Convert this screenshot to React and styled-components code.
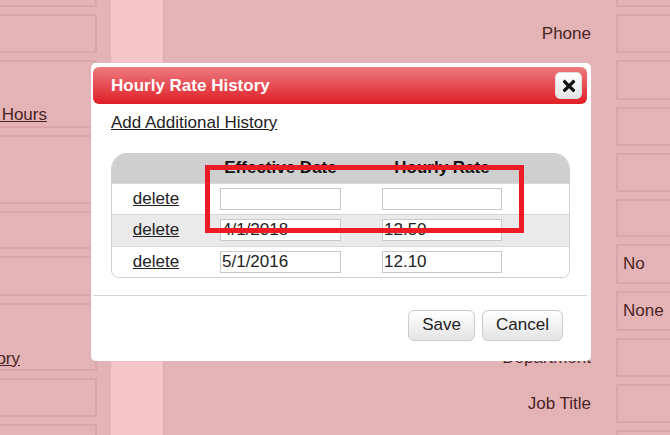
import React from "react";
import styled, { createGlobalStyle } from "styled-components";
import { FaTimes } from "react-icons/fa";

const GlobalStyle = createGlobalStyle`
    html, body {
        margin:0;
        padding:0;
        overflow:hidden;
    }
    body {
        font-family:"Liberation Sans", Arial, sans-serif;
        font-size:17px;
    }
`

const Page = styled.div`
    position:relative;
    display:flex;
    width:670px;
    height:435px;
    overflow:hidden;
    background:#e4b3b5;
    color:#4a2526;
`

const LeftColumn = styled.div`
    flex:none;
    display:flex;
    flex-direction:column;
    gap:7px;
    width:107px;
    margin-left:-10px;
`

const Band = styled.div`
    flex:none;
    width:52px;
    margin-left:14px;
    background:#f7c5c8;
    border-right:1px solid #dba9ac;
`

const RightColumn = styled.div`
    flex:1;
    display:flex;
    flex-direction:column;
    gap:7px;
    margin-right:-10px;
`

const Row = styled.div`
    display:grid;
    grid-template-columns:1fr 64px;
    column-gap:25px;
    align-items:center;
`

const Label = styled.span`
    text-align:right;
`

const Field = styled.div`
    box-sizing:border-box;
    flex:none;
    display:flex;
    align-items:${props => props.$tall ? 'flex-end' : 'center'};
    justify-content:${props => props.$tall ? 'flex-end' : 'flex-start'};
    height:${props => props.$height}px;
    padding:${props => props.$tall ? `0 ${props.$inset}px ${props.$lift}px 0` : '0 0 0 5px'};
    border:2px solid #d9a6a9;
    border-top-width:${props => props.$clipped ? 0 : 2}px;
    white-space:nowrap;
`

const PageLink = styled.a`
    color:#4a2526;
    text-decoration:underline;
`

const Modal = styled.div`
    box-sizing:border-box;
    position:absolute;
    left:91px;
    top:63px;
    display:flex;
    flex-direction:column;
    width:500px;
    height:298px;
    padding:4px 4px 0 2px;
    background:#fff;
    border-radius:5px;
    box-shadow:0 0 1px #d8d0d0;
    color:#222;
`

const TitleBar = styled.div`
    flex:none;
    display:flex;
    align-items:center;
    justify-content:space-between;
    height:37px;
    padding:0 5px 0 18px;
    background:linear-gradient(#ed7b81, #e01e26);
    border-radius:6px;
`

const Title = styled.h2`
    margin:0;
    font-size:17px;
    font-weight:bold;
    color:#fff;
`

const CloseBtn = styled.button`
    display:flex;
    align-items:center;
    justify-content:center;
    width:27px;
    height:27px;
    padding:0;
    background:linear-gradient(#fff, #e4e4e4);
    border:1px solid #ddd;
    border-radius:5px;
    color:#111;
`

const Body = styled.div`
    flex:1;
    padding:10px 17px 0 18px;
`

const AddLink = styled.a`
    display:block;
    line-height:18px;
    color:#222;
    text-decoration:underline;
`

const Table = styled.div`
    box-sizing:border-box;
    height:125px;
    margin-top:21px;
    border:1px solid #d2d2d2;
    border-top:0;
    border-radius:16px 16px 8px 8px;
    overflow:hidden;
`

const HeadRow = styled.div`
    display:grid;
    grid-template-columns:108px 121px 41px 120px;
    align-items:center;
    height:30px;
    background:#cfcfcf;
    font-weight:bold;
    color:#111;
    text-align:center;
`

const HeadCell = styled.span`
    white-space:nowrap;
    grid-column:${props => props.$col};
`

const DataRow = styled.div`
    box-sizing:border-box;
    display:grid;
    grid-template-columns:108px 121px 41px 120px;
    align-items:center;
    height:${props => props.$shaded ? 32 : 31}px;
    padding-bottom:${props => props.$shaded ? 1 : 0}px;
    background:${props => props.$shaded ? '#eaeaea' : '#fff'};
    border-top:1px solid ${props => props.$shaded ? '#d4d4d4' : '#d8d8d8'};
`

const DeleteLink = styled.a`
    width:88px;
    color:#222;
    line-height:18px;
    text-align:center;
    text-decoration:underline;
`

const RateInput = styled.input`
    box-sizing:border-box;
    width:100%;
    height:22px;
    padding:0 1px;
    background:#fff;
    border:1px solid #c8c8c8;
    border-radius:0;
    outline:none;
    font-family:"Liberation Sans", Arial, sans-serif;
    font-size:17px;
    color:#222;
    grid-column:${props => props.$col};
`

const Footer = styled.div`
    flex:none;
    display:flex;
    justify-content:flex-end;
    gap:7px;
    height:66px;
    padding:14px 24px 0 0;
    box-sizing:border-box;
    border-top:1px solid #d4d4d4;
`

const Btn = styled.button`
    width:${props => props.$width}px;
    height:31px;
    padding:0 0 1px;
    background:linear-gradient(#fff, #e4e4e4);
    border:1px solid #ccc;
    border-radius:6px;
    font-family:"Liberation Sans", Arial, sans-serif;
    font-size:17px;
    color:#222;
`

const Highlight = styled.div`
    position:absolute;
    left:205px;
    top:165px;
    box-sizing:border-box;
    width:319px;
    height:68px;
    border:5px solid #ed1c24;
`

const leftFields = [
    { height: 7, clipped: true },
    { height: 39 },
    { height: 68, link: "Edit Hours", inset: 48, lift: 1 },
    { height: 69 },
    { height: 38 },
    { height: 40 },
    { height: 68, link: "Rate History", inset: 75, lift: 0 },
    { height: 39 },
    { height: 39 },
];

const rightRows = [
    { height: 7, clipped: true },
    { height: 39, label: "Phone" },
    { height: 40 },
    { height: 39 },
    { height: 39 },
    { height: 38 },
    { height: 40, value: "No" },
    { height: 40, value: "None" },
    { height: 39, label: "Department" },
    { height: 39, label: "Job Title" },
    { height: 39 },
];

const history = [
    { date: "", rate: "" },
    { date: "4/1/2018", rate: "12.50", shaded: true },
    { date: "5/1/2016", rate: "12.10" },
];

function App() {
    return (
        <Page>
            <GlobalStyle />
            <LeftColumn>
                {leftFields.map((f, i) => (
                    <Field key={i} $height={f.height} $clipped={f.clipped} $tall={!!f.link} $inset={f.inset} $lift={f.lift}>
                        {f.link && <PageLink>{f.link}</PageLink>}
                    </Field>
                ))}
            </LeftColumn>
            <Band />
            <RightColumn>
                {rightRows.map((r, i) => (
                    <Row key={i}>
                        <Label>{r.label}</Label>
                        <Field $height={r.height} $clipped={r.clipped}>{r.value}</Field>
                    </Row>
                ))}
            </RightColumn>

            <Modal>
                <TitleBar>
                    <Title>Hourly Rate History</Title>
                    <CloseBtn><FaTimes size={18} /></CloseBtn>
                </TitleBar>
                <Body>
                    <AddLink>Add Additional History</AddLink>
                    <Table>
                        <HeadRow>
                            <HeadCell $col={2}>Effective Date</HeadCell>
                            <HeadCell $col={4}>Hourly Rate</HeadCell>
                        </HeadRow>
                        {history.map((h, i) => (
                            <DataRow key={i} $shaded={h.shaded}>
                                <DeleteLink>delete</DeleteLink>
                                <RateInput $col={2} defaultValue={h.date} />
                                <RateInput $col={4} defaultValue={h.rate} />
                            </DataRow>
                        ))}
                    </Table>
                </Body>
                <Footer>
                    <Btn $width={67}>Save</Btn>
                    <Btn $width={81}>Cancel</Btn>
                </Footer>
            </Modal>
            <Highlight />
        </Page>
    )
}

export default App;
